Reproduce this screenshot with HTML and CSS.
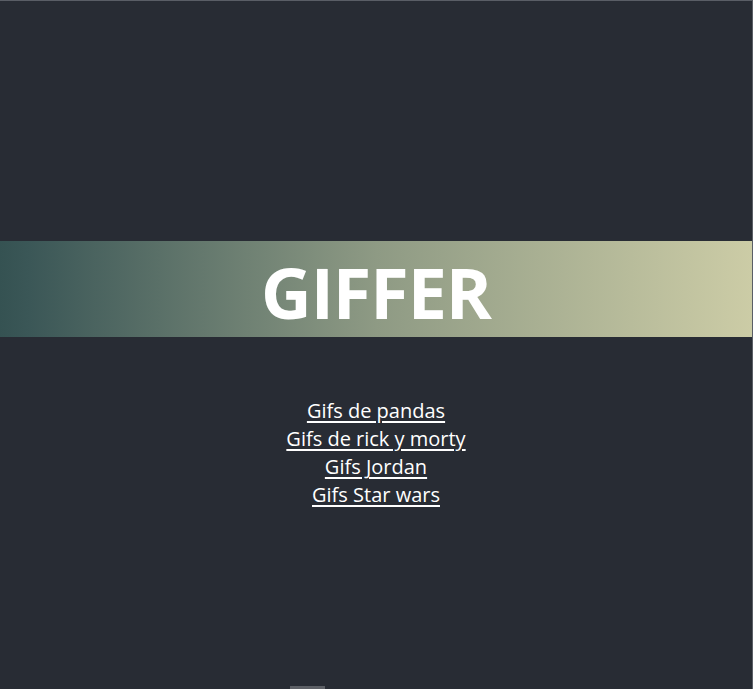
FILE: index.html
```html
<!DOCTYPE html>
<html lang="es">
<head>
<meta charset="utf-8">
<title>Giffer</title>
<link rel="stylesheet" href="styles.css">
</head>
<body>
<div class="app">
  <header class="banner">
    <h1 class="title">GIFFER</h1>
  </header>
  <nav class="links">
    <a href="#">Gifs de pandas</a>
    <a href="#">Gifs de rick y morty</a>
    <a href="#">Gifs Jordan</a>
    <a href="#">Gifs Star wars</a>
  </nav>
</div>
<div class="scroll-thumb"></div>
</body>
</html>
```

FILE: styles.css
```css
html, body {
  margin: 0;
  padding: 0;
  height: 100%;
}
body {
  background: #282c34;
  font-family: "Open Sans", "Noto Sans", sans-serif;
  color: #fff;
  border-top: 1px solid #5a5e66;
  border-right: 1px solid #5a5e66;
  box-sizing: border-box;
  position: relative;
  overflow: hidden;
}
.app {
  padding-top: 240px;
  display: flex;
  flex-direction: column;
  align-items: center;
}
.banner {
  width: 100%;
  height: 96px;
  background: linear-gradient(to right, #355252 0%, #3b5757 4%, #8e9a84 50%, #cccca6 100%);
  display: flex;
  align-items: center;
  justify-content: center;
}
.title {
  margin: 0;
  padding-top: 6px;
  font-size: 70px;
  font-weight: 700;
  letter-spacing: -1px;
  line-height: 1;
  color: #fff;
}
.links {
  margin-top: 60px;
  display: flex;
  flex-direction: column;
  align-items: center;
}
.links a {
  color: #fff;
  font-size: 20px;
  line-height: 28px;
  text-decoration: underline;
  text-underline-offset: 3px;
}
.scroll-thumb {
  position: absolute;
  left: 290px;
  bottom: 0;
  width: 35px;
  height: 3px;
  background: #5d6066;
}
```
